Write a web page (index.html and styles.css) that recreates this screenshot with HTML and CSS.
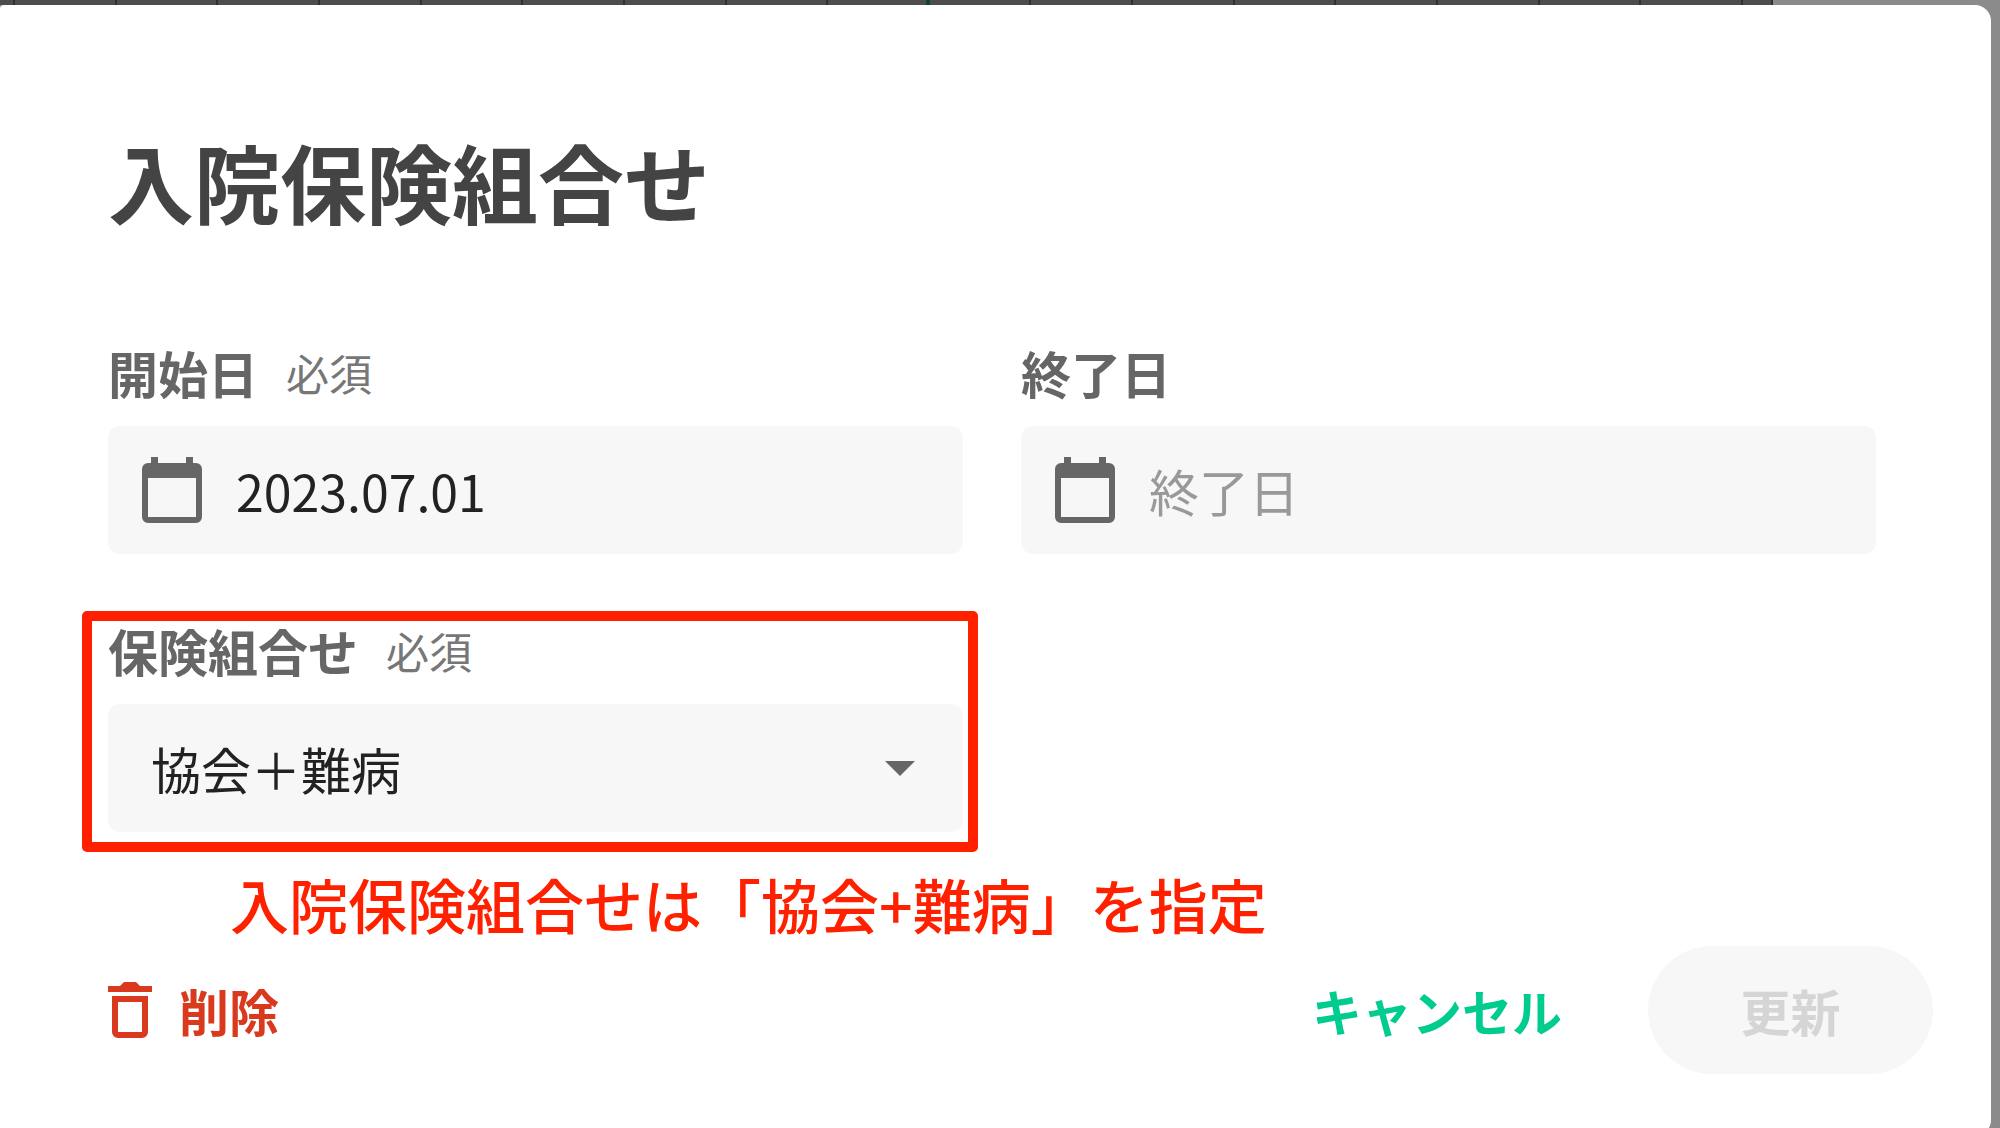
FILE: index.html
```html
<!DOCTYPE html>
<html lang="ja">
<head>
<meta charset="utf-8">
<meta name="viewport" content="width=device-width, initial-scale=1">
<title>入院保険組合せ</title>
<link rel="stylesheet" href="styles.css">
</head>
<body>
<div class="calendar-strip" aria-hidden="true">
  <span></span><span></span><span></span><span></span><span></span><span></span><span></span><span></span><span></span><span class="today"></span><span></span><span></span><span></span><span></span><span></span><span></span><span></span><span></span><span></span>
</div>
<main class="dialog" role="dialog" aria-labelledby="dialog-title">
  <form class="form">
    <h1 class="title" id="dialog-title">入院保険組合せ</h1>
    <div class="fields">
      <div class="field">
        <div class="field-head">
          <label class="label" for="start">開始日</label>
          <span class="required">必須</span>
        </div>
        <div class="control">
          <svg class="calendar-icon" viewBox="0 0 60 66" aria-hidden="true">
            <path fill-rule="evenodd" d="M9 0h7v6h28V0h7v6h3a6 6 0 0 1 6 6v48a6 6 0 0 1-6 6H6a6 6 0 0 1-6-6V12a6 6 0 0 1 6-6h3zM6 21v39h48V21z"/>
          </svg>
          <input class="input" id="start" type="text" value="2023.07.01">
        </div>
      </div>
      <div class="field">
        <div class="field-head">
          <label class="label" for="end">終了日</label>
        </div>
        <div class="control">
          <svg class="calendar-icon" viewBox="0 0 60 66" aria-hidden="true">
            <path fill-rule="evenodd" d="M9 0h7v6h28V0h7v6h3a6 6 0 0 1 6 6v48a6 6 0 0 1-6 6H6a6 6 0 0 1-6-6V12a6 6 0 0 1 6-6h3zM6 21v39h48V21z"/>
          </svg>
          <input class="input" id="end" type="text" placeholder="終了日">
        </div>
      </div>
      <div class="field marked">
        <div class="field-head">
          <label class="label" for="insurance">保険組合せ</label>
          <span class="required">必須</span>
        </div>
        <div class="control control-select">
          <select class="select" id="insurance">
            <option>協会＋難病</option>
          </select>
          <svg class="arrow-icon" viewBox="0 0 30 15" aria-hidden="true"><path d="M0 0h30L15 15z"/></svg>
        </div>
      </div>
    </div>
    <p class="note">入院保険組合せは「協会+難病」を指定</p>
    <div class="actions">
      <button class="button delete" type="button">
        <svg class="trash-icon" viewBox="0 0 44 56" aria-hidden="true">
          <path fill-rule="evenodd" d="M0 4h12l4-4h12l4 4h12v6H0zM4 14h36v36a6 6 0 0 1-6 6H10a6 6 0 0 1-6-6zM10 20v30h24V20z"/>
        </svg>
        削除
      </button>
      <button class="button cancel" type="button">キャンセル</button>
      <button class="button update" type="submit" disabled>更新</button>
    </div>
  </form>
</main>
</body>
</html>
```

FILE: styles.css
```css
* {
  box-sizing: border-box;
}

body {
  margin: 0;
  min-height: 100vh;
  overflow: hidden;
  background: #8b8b8b;
  color: #222;
  font-family: "Noto Sans CJK JP", sans-serif;
  font-size: 50px;
  line-height: 64px;
}

/* Calendar header that shows above the dialog */
.calendar-strip {
  display: grid;
  grid-template-columns: 15px repeat(17, 1fr) 30px;
  height: 5px;
  margin-right: 227px;
  background: #4d4d4d;
}

.calendar-strip span {
  border-right: 2px solid #303030;
}

.calendar-strip .today {
  border-right: 4px solid #064a35;
}

.dialog {
  margin-right: 9px;
  padding-bottom: 62px;
  border-radius: 4px 16px 16px 0;
  background: #fff;
}

.form {
  padding: 128px 115px 0 108px;
}

.title {
  margin: 0 0 111px;
  color: #444;
  font-size: 86px;
  font-weight: 700;
  line-height: 96px;
}

.fields {
  display: grid;
  grid-template-columns: 1fr 1fr;
  gap: 64px 58px;
}

.field {
  position: relative;
  min-width: 0;
}

.field-head {
  display: flex;
  align-items: center;
  gap: 28px;
  margin-bottom: 22px;
}

.label {
  color: #666;
  font-weight: 700;
}

.required {
  color: #777;
  font-size: 43px;
  font-weight: 400;
}

.control {
  display: flex;
  align-items: center;
  gap: 34px;
  height: 128px;
  padding-left: 34px;
  border-radius: 12px;
  background: #f7f7f7;
}

.calendar-icon {
  flex: none;
  width: 60px;
  height: 66px;
  fill: #666;
}

.input,
.select {
  flex: 1;
  min-width: 0;
  height: 100%;
  padding: 0;
  border: 0;
  background: transparent;
  color: #222;
  font: inherit;
  outline: 0;
}

.input::placeholder {
  color: #999;
  opacity: 1;
}

.control-select {
  display: grid;
  grid-template-columns: 1fr;
  padding: 0;
}

.select,
.arrow-icon {
  grid-area: 1 / 1;
}

.select {
  padding-left: 43px;
  appearance: none;
}

.arrow-icon {
  justify-self: end;
  width: 30px;
  height: 15px;
  margin-right: 48px;
  fill: #666;
  pointer-events: none;
}

/* Red frame drawn round the field being explained */
.marked::after {
  content: "";
  position: absolute;
  inset: -7px -15px -20px -26px;
  border: 10px solid #ff2000;
  border-radius: 5px;
  pointer-events: none;
}

.note {
  margin: 40px 0 10px 122px;
  color: #ff2000;
  font-size: 59px;
  font-weight: 500;
}

.actions {
  display: flex;
  align-items: center;
  margin-right: -57px;
}

.button {
  padding: 0;
  border: 0;
  background: transparent;
  font: inherit;
  font-weight: 700;
}

.delete {
  display: flex;
  align-items: center;
  gap: 27px;
  margin-right: auto;
  color: #d93a1e;
}

.trash-icon {
  width: 44px;
  height: 56px;
  fill: currentColor;
}

.cancel {
  margin-right: 86px;
  color: #00cc8f;
}

.update {
  width: 285px;
  height: 128px;
  border-radius: 64px;
  background: #f7f7f7;
  color: #d5d5d5;
}
```
